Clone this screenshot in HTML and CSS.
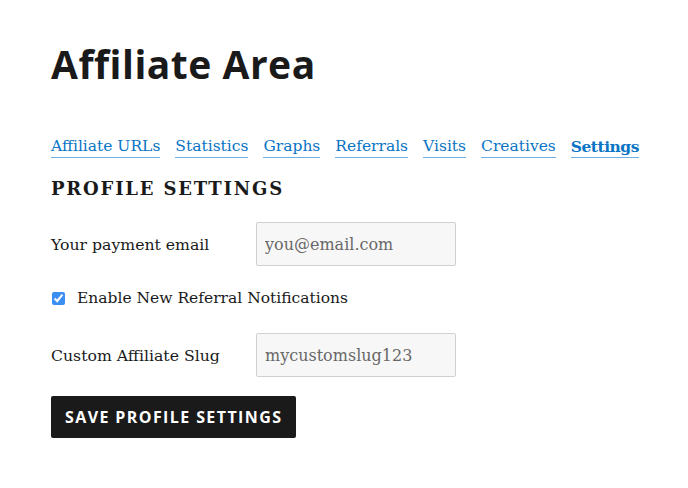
FILE: index.html
```html
<!DOCTYPE html>
<html>
  <head>
    <meta charset="utf-8" />
    <title>Affiliate Area</title>
    <link rel="stylesheet" href="styles.css">
  </head>

  <body>
    <div class="page">
      <h1 class="title">Affiliate Area</h1>

      <ul class="tabs">
        <li><a href="#">Affiliate URLs</a></li>
        <li><a href="#">Statistics</a></li>
        <li><a href="#">Graphs</a></li>
        <li><a href="#">Referrals</a></li>
        <li><a href="#">Visits</a></li>
        <li><a href="#">Creatives</a></li>
        <li class="active"><a href="#">Settings</a></li>
      </ul>

      <form class="profile">
        <h4 class="section-title">Profile Settings</h4>

        <div class="row">
          <label for="payment-email">Your payment email</label>
          <input type="email" id="payment-email" placeholder="you@email.com" />
        </div>

        <div class="row check">
          <input type="checkbox" id="notify" checked />
          <label for="notify">Enable New Referral Notifications</label>
        </div>

        <div class="row">
          <label for="slug">Custom Affiliate Slug</label>
          <input type="text" id="slug" placeholder="mycustomslug123" />
        </div>

        <button type="submit">Save Profile Settings</button>
      </form>
    </div>
  </body>
</html>
```

FILE: styles.css
```css
* {
  box-sizing: border-box;
}

html,
body {
  margin: 0;
  padding: 0;
}

body {
  font-family: "DejaVu Serif", "Liberation Serif", serif;
  font-size: 16px;
  color: #1a1a1a;
  background: #fff;
}

.page {
  padding: 36px 51px 0 51px;
}

.title {
  margin: 0;
  font-family: "Open Sans", "DejaVu Sans", sans-serif;
  font-weight: 700;
  font-size: 39px;
  line-height: 56px;
  letter-spacing: 0.5px;
}

.tabs {
  list-style: none;
  margin: 44px 0 0 0;
  padding: 0;
  display: flex;
  gap: 15px;
  white-space: nowrap;
}

.tabs a {
  color: #0a74c4;
  text-decoration: none;
  font-size: 15.5px;
  line-height: 21px;
  display: inline-block;
  border-bottom: 1px solid #6cb0e6;
}

.tabs .active a {
  font-weight: 700;
  letter-spacing: -0.5px;
}

.profile {
  margin-top: 20px;
}

.section-title {
  margin: 0 0 22px 0;
  font-size: 18px;
  font-weight: 700;
  letter-spacing: 1.8px;
  text-transform: uppercase;
  line-height: 22px;
}

.row {
  display: flex;
  align-items: center;
  margin-bottom: 23px;
}

.row label {
  width: 205px;
  font-size: 15.7px;
}

.row input[type="text"],
.row input[type="email"] {
  width: 200px;
  height: 44px;
  padding: 0 8px;
  font-family: inherit;
  font-size: 16px;
  color: #1a1a1a;
  background: #f7f7f7;
  border: 1px solid #d1d1d1;
  border-radius: 2px;
}

.row input::placeholder {
  color: #686868;
}

.row.check {
  margin-bottom: 26px;
}

.row.check input {
  margin: 0 12px 0 1px;
  width: 13px;
  height: 13px;
  accent-color: #3b8ef2;
}

.row.check label {
  width: auto;
  font-size: 15.5px;
}

button {
  margin-top: -4px;
  height: 42px;
  padding: 0 14px;
  font-family: "Open Sans", "DejaVu Sans", sans-serif;
  font-weight: 700;
  font-size: 16px;
  letter-spacing: 1.4px;
  text-transform: uppercase;
  color: #fff;
  background: #1a1a1a;
  border: none;
  border-radius: 2px;
  cursor: pointer;
}
```
